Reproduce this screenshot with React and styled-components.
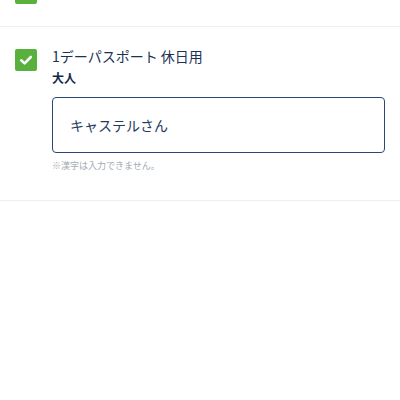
import React from 'react'
import styled, { createGlobalStyle } from 'styled-components'

const GlobalStyle = createGlobalStyle`
  html, body {
    margin: 0;
    padding: 0;
    background: #fff;
  }
  body {
    font-family: "Noto Sans CJK JP", "Noto Sans", sans-serif;
    color: #1c3156;
  }
`

const Page = styled.div`
  margin-top: -30px;
  display: flex;
  flex-direction: column;
`

const Item = styled.div`
  display: flex;
  align-items: flex-start;
  gap: 15px;
  padding: ${p => p.$pad};
  border-bottom: 1px solid #eceef0;
`

const Check = styled.div`
  flex: none;
  width: 22px;
  height: 22px;
  border-radius: 2px;
  background: #58b13c;
  display: flex;
  align-items: center;
  justify-content: center;
`

const Body = styled.div`
  flex: 1;
  display: flex;
  flex-direction: column;
`

const Title = styled.div`
  font-size: 14px;
  line-height: 14px;
  color: #1c3156;
`

const Label = styled.div`
  margin-top: 9px;
  font-size: 12px;
  line-height: 12px;
  font-weight: 700;
  color: #14284a;
`

const Field = styled.input`
  margin-top: 13px;
  box-sizing: border-box;
  width: 100%;
  height: 56px;
  padding: 0 17px;
  border: 1.5px solid #2b4878;
  border-radius: 4px;
  background: #fff;
  font-family: "Noto Sans CJK JP", sans-serif;
  font-size: 14px;
  color: #233a60;
  outline: none;
`

const Note = styled.div`
  margin-top: 8px;
  font-size: 9px;
  line-height: 10px;
  color: #a3aab3;
`

function CheckMark() {
  return (
    <Check>
      <svg width="16" height="16" viewBox="0 0 16 16">
        <path d="M3.2 8.3 L6.6 11.4 L12.8 5" fill="none" stroke="#fff" strokeWidth="2.6" strokeLinecap="round" strokeLinejoin="round" />
      </svg>
    </Check>
  )
}

export default function App() {
  return (
    <>
      <GlobalStyle />
      <Page>
        <Item $pad="12px 15px 22px">
          <CheckMark />
        </Item>
        <Item $pad="22px 15px 29px">
          <CheckMark />
          <Body>
            <Title>1デーパスポート 休日用</Title>
            <Label>大人</Label>
            <Field readOnly defaultValue="キャステルさん" />
            <Note>※漢字は入力できません。</Note>
          </Body>
        </Item>
      </Page>
    </>
  )
}
